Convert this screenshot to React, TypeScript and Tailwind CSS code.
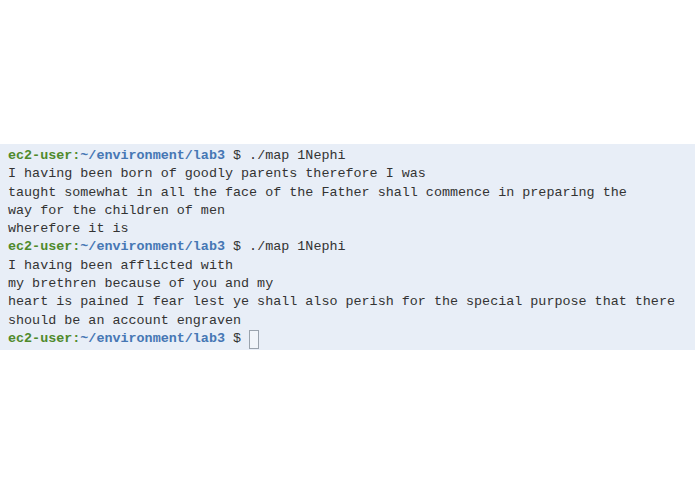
import React from 'react'

const Prompt: React.FC<{ cmd?: string; cursor?: boolean }> = ({ cmd, cursor }) => (
  <div className="flex items-center whitespace-pre">
    <span className="font-bold text-[#4f8a2c]">ec2-user:</span>
    <span className="font-bold text-[#4677b4]">~/environment/lab3</span>
    <span className="text-[#333]"> $ </span>
    {cmd && <span className="text-[#333]">{cmd}</span>}
    {cursor && <span className="inline-block w-[10px] h-[19px] border border-[#9aa3ad] bg-white/40" />}
  </div>
)

const App: React.FC = () => {
  const first = [
    'I having been born of goodly parents therefore I was',
    'taught somewhat in all the face of the Father shall commence in preparing the',
    'way for the children of men',
    'wherefore it is',
  ]
  const second = [
    'I having been afflicted with',
    'my brethren because of you and my',
    'heart is pained I fear lest ye shall also perish for the special purpose that there',
    'should be an account engraven',
  ]

  return (
    <div className="w-[695px] h-[494px] bg-white pt-[144px]">
      <div
        className="w-[695px] h-[206px] bg-[#e8eef7] pl-2 pt-[3px] text-[13.4px] leading-[18.3px] text-[#333]"
        style={{ fontFamily: '"Liberation Mono", "DejaVu Sans Mono", monospace' }}
      >
        <Prompt cmd="./map 1Nephi" />
        {first.map((l) => (
          <div key={l} className="whitespace-pre">{l}</div>
        ))}
        <Prompt cmd="./map 1Nephi" />
        {second.map((l) => (
          <div key={l} className="whitespace-pre">{l}</div>
        ))}
        <Prompt cursor />
      </div>
    </div>
  )
}

export default App
